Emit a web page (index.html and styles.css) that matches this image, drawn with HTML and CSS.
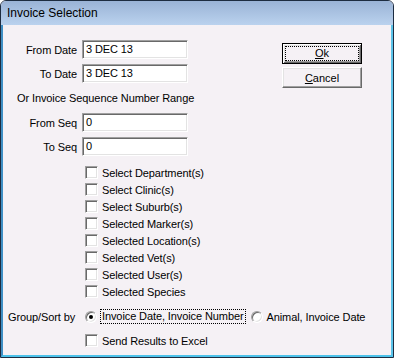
FILE: index.html
```html
<!DOCTYPE html>
<html lang="en">

<head>
    <meta charset="UTF-8">
    <title>Invoice Selection</title>
    <link rel="stylesheet" href="styles.css">
</head>

<body>

    <div class="window">
        <div class="titlebar">Invoice Selection</div>

        <div class="content">
            <!-- Date / sequence range + buttons -->
            <div class="top">
                <div class="fields">
                    <div class="field">
                        <span class="label">From Date</span>
                        <div class="textbox">3 DEC 13</div>
                    </div>
                    <div class="field">
                        <span class="label">To Date</span>
                        <div class="textbox">3 DEC 13</div>
                    </div>
                    <div class="note">Or Invoice Sequence Number Range</div>
                    <div class="field">
                        <span class="label">From Seq</span>
                        <div class="textbox">0</div>
                    </div>
                    <div class="field">
                        <span class="label">To Seq</span>
                        <div class="textbox">0</div>
                    </div>
                </div>

                <div class="buttons">
                    <button class="btn default"><span class="focus"><u>O</u>k</span></button>
                    <button class="btn"><span><u>C</u>ancel</span></button>
                </div>
            </div>

            <!-- Filters -->
            <div class="checks">
                <div class="check"><span class="box"></span>Select Department(s)</div>
                <div class="check"><span class="box"></span>Select Clinic(s)</div>
                <div class="check"><span class="box"></span>Select Suburb(s)</div>
                <div class="check"><span class="box"></span>Selected Marker(s)</div>
                <div class="check"><span class="box"></span>Selected Location(s)</div>
                <div class="check"><span class="box"></span>Selected Vet(s)</div>
                <div class="check"><span class="box"></span>Selected User(s)</div>
                <div class="check"><span class="box"></span>Selected Species</div>
            </div>

            <div class="sort">
                <span class="sort-label">Group/Sort by</span>
                <div class="radio"><span class="dot checked"></span><span class="focused">Invoice Date, Invoice Number</span></div>
                <div class="radio second"><span class="dot"></span>Animal, Invoice Date</div>
            </div>

            <div class="checks excel">
                <div class="check"><span class="box"></span>Send Results to Excel</div>
            </div>
        </div>
    </div>

</body>

</html>
```

FILE: styles.css
```css
* {
    box-sizing: border-box;
}

body {
    margin: 0;
    padding: 0;
    background: #ffffff;
    font-family: 'Liberation Sans', Arial, sans-serif;
    font-size: 11px;
    letter-spacing: -0.1px;
    color: #000;
}

.window {
    width: 394px;
    height: 358px;
    border: 1px solid #1d2c40;
    border-radius: 6px 6px 0 0;
    background: #f5f1f5;
    display: flex;
    flex-direction: column;
    overflow: hidden;
}

.titlebar {
    height: 24px;
    padding-left: 6px;
    line-height: 24px;
    font-size: 12px;
    letter-spacing: 0;
    background: linear-gradient(#9ab3d6, #bad2ee);
    color: #000;
}

.content {
    flex: 1;
    border-left: 2px solid #3f8fc4;
    border-right: 2px solid #5cc4ea;
    border-bottom: 2px solid #4cc2ea;
    padding-top: 15px;
}

/* Top section */
.top {
    display: flex;
    justify-content: space-between;
}

.fields {
    display: flex;
    flex-direction: column;
}

.field {
    display: flex;
    align-items: center;
    margin-bottom: 5px;
}

.label {
    width: 74px;
    text-align: right;
    margin-right: 5px;
}

.textbox {
    width: 106px;
    height: 19px;
    background: #fff;
    border: 1px solid;
    border-color: #a0a0a0 #ffffff #ffffff #a0a0a0;
    box-shadow: inset 1px 1px 0 #696969, inset -1px -1px 0 #e3e3e3;
    padding-left: 3px;
    line-height: 17px;
}

.note {
    margin: 4px 0 8px 14px;
    height: 13px;
    line-height: 13px;
}

/* Buttons */
.buttons {
    display: flex;
    flex-direction: column;
    gap: 3px;
    margin-top: 3px;
    margin-right: 29px;
}

.btn {
    width: 80px;
    height: 21px;
    padding: 0;
    font-family: inherit;
    font-size: 11px;
    color: #000;
    background: #f5f1f5;
    border: 1px solid;
    border-color: #ffffff #696969 #696969 #ffffff;
    box-shadow: inset -1px -1px 0 #a0a0a0, inset 1px 1px 0 #e3e3e3;
    display: flex;
    align-items: center;
    justify-content: center;
}

.btn.default {
    border: 1px solid #000;
    box-shadow: inset 1px 1px 0 #ffffff, inset -1px -1px 0 #696969, inset 2px 2px 0 #e3e3e3, inset -2px -2px 0 #a0a0a0;
}

.btn .focus {
    width: 72px;
    height: 13px;
    line-height: 12px;
    outline: 1px dotted #000;
}

/* Checkboxes */
.checks {
    margin-top: 3px;
    padding-left: 82px;
}

.check {
    height: 17px;
    display: flex;
    align-items: center;
}

.box {
    width: 13px;
    height: 13px;
    margin-right: 4px;
    background: #fff;
    border: 1px solid;
    border-color: #a0a0a0 #ffffff #ffffff #a0a0a0;
    box-shadow: inset 1px 1px 0 #696969, inset -1px -1px 0 #e3e3e3;
}

.excel {
    margin-top: 7px;
}

/* Group / sort */
.sort {
    margin-top: 8px;
    height: 17px;
    display: flex;
    align-items: center;
    padding-left: 5px;
}

.sort-label {
    width: 77px;
}

.radio {
    display: flex;
    align-items: center;
}

.radio.second {
    margin-left: 6px;
}

.dot {
    width: 12px;
    height: 12px;
    margin-right: 4px;
    border-radius: 50%;
    background: #fff;
    border: 1px solid;
    border-color: #a0a0a0 #ffffff #ffffff #a0a0a0;
    box-shadow: inset 1px 1px 0 #696969, inset -1px -1px 0 #e3e3e3;
    display: flex;
    align-items: center;
    justify-content: center;
}

.dot.checked::after {
    content: "";
    width: 4px;
    height: 4px;
    border-radius: 50%;
    background: #000;
}

.focused {
    outline: 1px dotted #000;
    padding: 0 1px;
    line-height: 13px;
}
```
